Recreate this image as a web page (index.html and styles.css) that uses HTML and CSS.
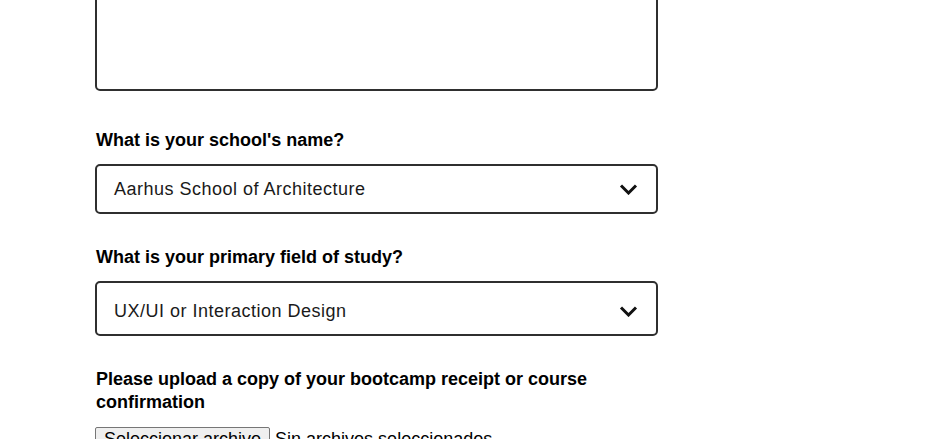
FILE: index.html
```html
<!DOCTYPE html>
<html>
<head>
<meta charset="utf-8">
<link rel="stylesheet" href="styles.css">
</head>
<body>
<form class="form">
  <div class="field field-textarea">
    <textarea class="textarea"></textarea>
  </div>
  <div class="field">
    <label class="label">What is your school's name?</label>
    <div class="select select-a">
      <span class="select-value">Aarhus School of Architecture</span>
      <svg class="chevron" width="19" height="12" viewBox="0 0 19 12"><path d="M2 2.5 L9.5 10 L17 2.5" fill="none" stroke="#111" stroke-width="3"/></svg>
    </div>
  </div>
  <div class="field">
    <label class="label">What is your primary field of study?</label>
    <div class="select select-b">
      <span class="select-value">UX/UI or Interaction Design</span>
      <svg class="chevron" width="19" height="12" viewBox="0 0 19 12"><path d="M2 2.5 L9.5 10 L17 2.5" fill="none" stroke="#111" stroke-width="3"/></svg>
    </div>
  </div>
  <div class="field">
    <label class="label">Please upload a copy of your bootcamp receipt or course confirmation</label>
    <div class="file">
      <button type="button" class="file-btn">Seleccionar archivo</button>
      <span class="file-text">Sin archivos seleccionados</span>
    </div>
  </div>
</form>
</body>
</html>
```

FILE: styles.css
```css
html, body {
  margin: 0;
  padding: 0;
  background: #fff;
  overflow: hidden;
}
body {
  font-family: "Liberation Sans", Arial, sans-serif;
  color: #111;
}
.form {
  width: 563px;
  margin-left: 95px;
  margin-top: -60px;
  display: flex;
  flex-direction: column;
}
.field {
  display: flex;
  flex-direction: column;
  margin-bottom: 32px;
}
.field-textarea {
  margin-bottom: 38px;
}
.textarea {
  box-sizing: border-box;
  width: 563px;
  height: 151px;
  border: 2px solid #2f2f2f;
  border-radius: 5px;
  resize: none;
  margin: 0;
  display: block;
}
.label {
  font-size: 18px;
  font-weight: bold;
  line-height: 23px;
  color: #000;
  margin-bottom: 12px;
  padding-left: 1px;
}
.select {
  box-sizing: border-box;
  border: 2px solid #2f2f2f;
  border-radius: 5px;
  display: flex;
  align-items: center;
  justify-content: space-between;
  padding: 0 18px 0 17px;
  font-size: 18px;
  letter-spacing: 0.5px;
  color: #1a1a1a;
}
.select-a { height: 50px; }
.select-b { height: 55px; padding-top: 5px; }
.chevron { display: block; }
.file {
  display: flex;
  align-items: center;
  gap: 5px;
  font-size: 18px;
  margin-top: 1px;
}
.file-btn {
  font-family: "Liberation Sans", Arial, sans-serif;
  font-size: 18px;
  background: #efefef;
  border: 1px solid #767676;
  border-radius: 2px;
  padding: 1px 8px;
  color: #000;
  margin: 0;
}
.file-text { color: #000; }
```
